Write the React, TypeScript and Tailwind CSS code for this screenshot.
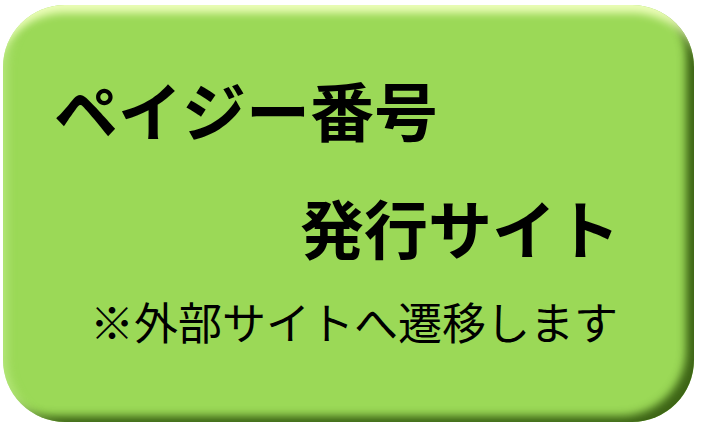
import React from 'react';

const App: React.FC = () => {
  return (
    <div className="w-[705px] h-[433px] bg-white relative overflow-hidden">
      <div className="absolute left-[3px] top-[5px] w-[691px] h-[417px] rounded-[62px] bg-[#9bd957] shadow-[inset_0_20px_8px_-12px_rgba(240,255,190,0.95),inset_12px_0_10px_-8px_rgba(200,240,150,0.6),inset_-12px_-10px_8px_-4px_rgba(45,80,10,0.85)]" />
      <div
        className="relative flex flex-col text-black"
        style={{ fontFamily: '"Noto Sans CJK JP", "Noto Sans", sans-serif' }}
      >
        <div className="pl-[54px] pt-[64px] text-[64px] font-bold leading-[88px]">
          ペイジー番号
        </div>
        <div className="pl-[300px] pt-[30px] text-[64px] font-bold leading-[88px]">
          発行サイト
        </div>
        <div className="pl-[90px] pt-[21px] text-[44px] font-normal leading-[60px]">
          ※外部サイトへ遷移します
        </div>
      </div>
    </div>
  );
};

export default App;
